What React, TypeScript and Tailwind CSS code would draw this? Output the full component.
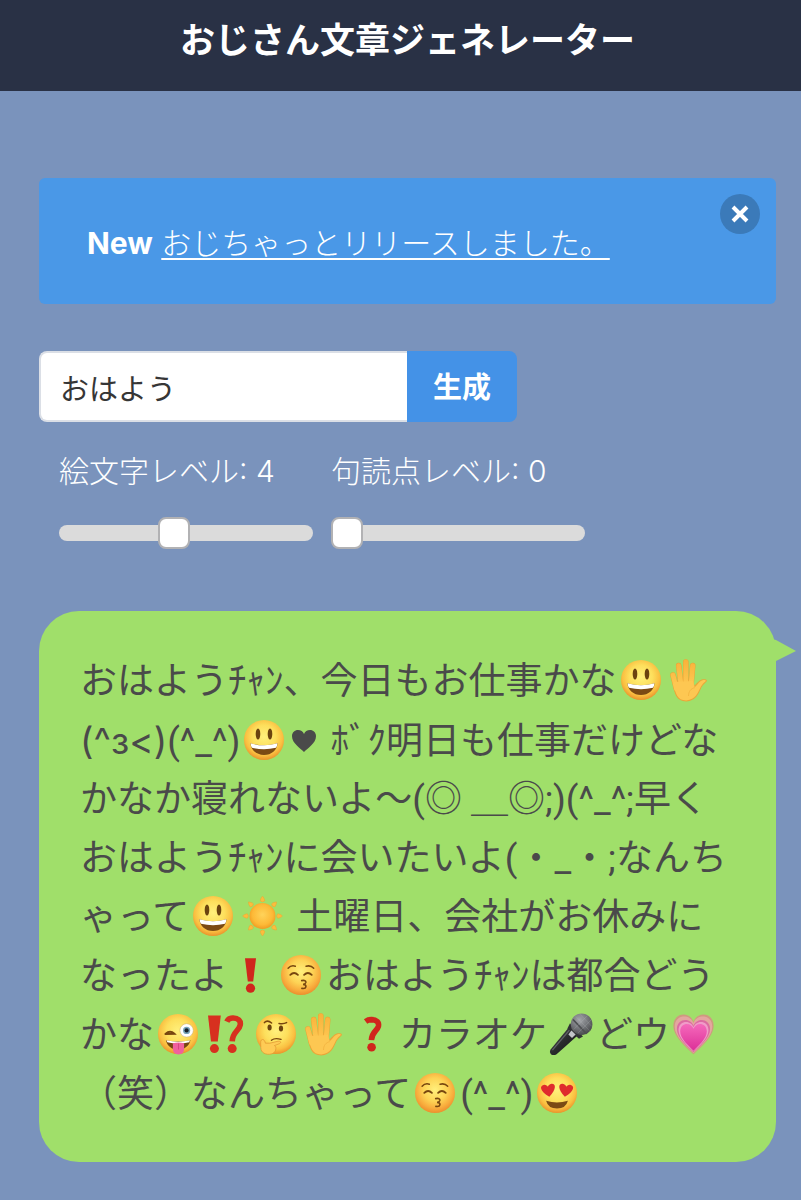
import { useState, type ReactNode } from "react";

function Defs() {
  return (
    <svg className="absolute size-0" aria-hidden="true">
      <defs>
        <radialGradient id="face" cx="50%" cy="42%" r="58%">
          <stop offset="0" stopColor="#fff07c" />
          <stop offset="0.5" stopColor="#fddf5c" />
          <stop offset="0.8" stopColor="#fabf41" />
          <stop offset="1" stopColor="#ea932b" />
        </radialGradient>
        <radialGradient id="blush" cx="50%" cy="42%" r="58%">
          <stop offset="0" stopColor="#fff07c" />
          <stop offset="0.5" stopColor="#fdd355" />
          <stop offset="0.8" stopColor="#f8ac3d" />
          <stop offset="1" stopColor="#ec8f2d" />
        </radialGradient>
        <linearGradient id="skin" gradientUnits="userSpaceOnUse" x1="0" y1="2" x2="0" y2="28">
          <stop offset="0" stopColor="#f9b23a" />
          <stop offset="1" stopColor="#fdc853" />
        </linearGradient>
        <radialGradient id="sun" cx="50%" cy="45%" r="55%">
          <stop offset="0" stopColor="#ffd35a" />
          <stop offset="0.7" stopColor="#fdb937" />
          <stop offset="1" stopColor="#f09c22" />
        </radialGradient>
        <linearGradient id="mic" x1="0" y1="0" x2="1" y2="1">
          <stop offset="0" stopColor="#55575a" />
          <stop offset="0.5" stopColor="#2a2b2d" />
          <stop offset="1" stopColor="#111214" />
        </linearGradient>
        <radialGradient id="mesh" cx="40%" cy="30%" r="70%">
          <stop offset="0" stopColor="#a4a6aa" />
          <stop offset="0.6" stopColor="#707276" />
          <stop offset="1" stopColor="#4a4b4e" />
        </radialGradient>
        <linearGradient id="pink" x1="0" y1="0" x2="0" y2="1">
          <stop offset="0" stopColor="#f569bb" />
          <stop offset="1" stopColor="#dc2f98" />
        </linearGradient>
      </defs>
    </svg>
  );
}

function Glyph({ label, children }: { label: string; children: ReactNode }) {
  return (
    <svg
      role="img"
      aria-label={label}
      viewBox="0 0 49 44"
      className="inline-block h-[44px] w-[49px] align-[-8px]"
    >
      {children}
    </svg>
  );
}

function Disc({ fill = "url(#face)" }: { fill?: string }) {
  return <circle cx="24" cy="22" r="20" fill={fill} />;
}

function Smile() {
  return (
    <Glyph label="😃">
      <Disc />
      <ellipse cx="18" cy="16" rx="2.3" ry="5.5" fill="#6b430f" />
      <ellipse cx="30" cy="16" rx="2.3" ry="5.5" fill="#6b430f" />
      <path d="M10.4 25.2Q24 29.5 37.6 25.2C37 32 31.6 37 24 37S11 32 10.4 25.2Z" fill="#7b4a14" />
      <path d="M10.6 25.2Q24 29.5 37.4 25.2Q37.2 28.8 36 29.8Q24 32.6 12 29.8Q10.8 28.8 10.6 25.2Z" fill="#fff" />
    </Glyph>
  );
}

function Hand() {
  const fingers = "M7 17L10.5 31M12.7 7.6L15 27M19.8 4V26M26.7 7.6L25 27";
  return (
    <Glyph label="✋">
      <path d={fingers} fill="none" stroke="#e9a234" strokeWidth="5.6" strokeLinecap="round" />
      <path d="M7 24L13 22L27.5 22L28.4 27.8C30 26.4 32.8 22.4 35.8 21.6C38.4 21 41.6 21.4 40.8 23.2C39.8 24.8 37.6 25.6 35.6 29C33 34.4 30.4 43.2 20.2 43.4C10.4 43.4 8 36 7 24Z" fill="#eaa638" />
      <path d={fingers} fill="none" stroke="url(#skin)" strokeWidth="4.8" strokeLinecap="round" />
      <path d="M7.8 24L27 23L28.6 29C30.4 28.4 33 23.4 36 22.4C37.8 21.8 40.2 22 39.8 22.9C38 24.4 36.6 25.8 34.9 28.6C32 34.4 29.8 42 20.2 42.4C11.2 42.4 9 35.4 7.8 24Z" fill="#fdc752" />
      <path d="M22.5 38C22.6 33 25 30.6 28.8 29.6" fill="none" stroke="#f3b341" strokeWidth="0.9" />
    </Glyph>
  );
}

function Sun() {
  return (
    <Glyph label="☀️">
      {[0, 45, 90, 135, 180, 225, 270, 315].map((a) => (
        <path
          key={a}
          d="M24.5 2.2C25.4 3 27 5.8 26.6 7Q24.5 8.8 22.4 7C22 5.8 23.6 3 24.5 2.2Z"
          fill="#fbbd3e"
          stroke="#f0a22d"
          strokeWidth="0.5"
          transform={`rotate(${a} 24.5 22)`}
        />
      ))}
      <circle cx="24.5" cy="22" r="13" fill="url(#sun)" />
    </Glyph>
  );
}

function Exclamation() {
  return (
    <Glyph label="❗">
      <path d="M17 5.2H28L25.2 28.6H19.8Z" fill="#d0261c" />
      <circle cx="22.5" cy="35.2" r="4.6" fill="#d0261c" />
    </Glyph>
  );
}

function Interrobang() {
  return (
    <Glyph label="⁉️">
      <g fill="#d7301f">
        <path d="M5 3.5H17.8L14.8 29.5H8Z" />
        <circle cx="11.4" cy="36.6" r="4.5" />
        <circle cx="29.2" cy="36.6" r="4.5" />
      </g>
      <path d="M23.8 9.6Q25.6 5.8 30.2 6C35.2 6.2 38 9 37.2 13C36.2 18.8 29.4 20 29.2 29.4" fill="none" stroke="#d7301f" strokeWidth="5.6" />
    </Glyph>
  );
}

function Question() {
  return (
    <Glyph label="❓">
      <circle cx="21.6" cy="35.2" r="4.3" fill="#d0261c" />
      <path d="M15.6 9.4Q18 7.6 21.4 7.6C26.6 7.8 29.3 10.4 28.4 14.4C27.2 19.2 21.8 19.4 21.4 28.2" fill="none" stroke="#d0261c" strokeWidth="5.6" />
    </Glyph>
  );
}

function Kiss() {
  return (
    <Glyph label="😚">
      <Disc fill="url(#blush)" />
      <g fill="none" stroke="#77460f" strokeLinecap="round">
        <path d="M11.1 15.2Q14 11.9 18.3 13.2M29.1 13.2Q33.9 12 36.7 15.2" strokeWidth="1.5" />
        <path d="M13.3 21.8Q17.1 18 20.9 21.8M27.1 21.8Q30.9 18 34.7 21.8" strokeWidth="1.9" />
        <path d="M24.7 27.6Q29.1 26.8 28.9 29.4Q28.5 31.2 26.1 31.4Q29.3 31.6 28.9 33.8Q28.5 36 24.9 35.4" strokeWidth="1.6" />
      </g>
    </Glyph>
  );
}

function Wink() {
  return (
    <Glyph label="😜">
      <Disc />
      <path d="M11.4 22Q16 17.8 20.4 21.8L11.4 22" fill="none" stroke="#77460f" strokeWidth="1.9" strokeLinecap="round" />
      <circle cx="32.6" cy="18.4" r="6.7" fill="#fff" stroke="#c9a86d" strokeWidth="0.5" />
      <circle cx="32.6" cy="18.4" r="3.6" fill="#78a4bb" />
      <circle cx="32.6" cy="18.4" r="2.1" fill="#18222b" />
      <path d="M11.9 28.2Q24 31 36.5 28.2C35.1 34 30.5 37.6 24 37.6S13.3 34 11.9 28.2Z" fill="#774511" />
      <path d="M12.5 28.3Q24 31 35.9 28.3L35.3 30.2Q24 33 13.3 30.2Z" fill="#fff" />
      <path d="M18.9 31.2Q24.3 29.6 30.1 31.2V37Q30.1 42.4 24.5 42.4T18.9 37Z" fill="#f0609d" />
      <path d="M24.5 31.5V37.5" stroke="#d64383" strokeWidth="1" />
    </Glyph>
  );
}

function Thinking() {
  return (
    <Glyph label="🤔">
      <Disc />
      <ellipse cx="17.6" cy="15.6" rx="2.1" ry="3" fill="#6b430f" />
      <ellipse cx="29" cy="16.6" rx="2.1" ry="3" fill="#6b430f" />
      <g fill="none" stroke="#77460f" strokeLinecap="round">
        <path d="M12.4 10.6Q15.4 7.4 19.6 11M27 11.4Q31.6 12.2 34.6 10.6" strokeWidth="1.5" />
        <path d="M19.4 28.2Q23 25.6 29 27.4" strokeWidth="1.4" />
      </g>
      <path d="M9.4 28C10.6 26.8 12.6 27.6 13.4 31.2L17.8 31.2L26 29.2C29.2 28.8 29.4 31 27.2 31.8L22.4 33.6C25 34.4 24.4 41 19.2 42C13.8 43.2 8.8 40.8 8.8 35.6C8.8 32 8.2 29.2 9.4 28Z" fill="#fecb55" stroke="#e39a34" strokeWidth="0.8" />
    </Glyph>
  );
}

function HeartEyes() {
  const heart = "M0 6.6C-7-0.4-6.6-5.6-3.2-5.8C-1.4-5.8-0.4-4.4 0-3.4C0.4-4.4 1.4-5.8 3.2-5.8C6.6-5.6 7-0.4 0 6.6Z";
  return (
    <Glyph label="😍">
      <Disc />
      <path d={heart} fill="#df2b2d" transform="translate(15.4 19.2) rotate(-8) scale(1.25 1.02)" />
      <path d={heart} fill="#df2b2d" transform="translate(32.8 19.2) rotate(8) scale(1.25 1.02)" />
      <path d="M13.1 29.8Q24 33.2 34.9 29.8Q32.9 37.6 24 37.6T13.1 29.8Z" fill="#7b4a14" />
    </Glyph>
  );
}

function Mic() {
  return (
    <Glyph label="🎤">
      <path d="M22.5 14.5L31.2 23L9.6 42.2Q6.6 43.8 4.2 42.4Q2 40.2 3.6 37.4Z" fill="url(#mic)" />
      <path d="M5.4 38.2L23.4 17" stroke="#606266" strokeWidth="1.2" />
      <path d="M23 11.2L36 24.6L32 26.8L20.4 16.4Z" fill="#313235" />
      <path d="M24.4 18.6L28.6 22.6L25 26L21.4 22.4Z" fill="#c3c5c8" />
      <circle cx="34.6" cy="12.2" r="10.8" fill="url(#mesh)" />
      <path d="M26 7.5L39.6 21.8" stroke="#4d4f52" strokeWidth="1.8" />
      <path d="M29 4.6L42.6 18.8M33 2.2L45 14.6M26.6 17.6L40.4 3.6M31 21L44.6 7.4" stroke="#c0c2c6" strokeOpacity="0.28" strokeWidth="0.8" />
    </Glyph>
  );
}

function GrowingHeart() {
  const heart = "M0 16C-5 11-13.6 3.4-13.6-4.2C-13.6-9.6-10-12-6.8-12C-3.4-12-1-9.8 0-7C1-9.8 3.4-12 6.8-12C10-12 13.6-9.6 13.6-4.2C13.6 3.4 5 11 0 16Z";
  return (
    <Glyph label="💗">
      <path d={heart} fill="#cf9a7f" transform="translate(23.5 19.6) scale(1.48 1.42)" />
      <path d={heart} fill="#e3a79f" transform="translate(23.5 20.2) scale(1.38 1.3)" />
      <path d={heart} fill="#dc6ba2" transform="translate(23.5 21.8) scale(1.22 1.16)" />
      <path d={heart} fill="#f09bc8" transform="translate(23.5 22.6) scale(1.1 1.04)" />
      <path d={heart} fill="url(#pink)" transform="translate(23.5 23.4) scale(0.98 0.96)" />
    </Glyph>
  );
}

function BlackHeart() {
  return (
    <svg role="img" aria-label="♥" viewBox="0 0 32 24" className="inline-block h-[24px] w-[32px] align-[1px]">
      <path d="M15 23C11.4 19 3 14.4 3 7.2C3 3.4 5.8 1 9 1C11.8 1 14 2.6 15 5C16 2.6 18.2 1 21 1C24.2 1 27 3.4 27 7.2C27 14.4 18.6 19 15 23Z" fill="#4a4a4a" />
    </svg>
  );
}

function Level({ id, label, initial, max }: { id: string; label: string; initial: number; max: number }) {
  const [value, setValue] = useState(initial);
  return (
    <div className="flex w-[254px] flex-col">
      <label htmlFor={id} className="text-[30px] leading-[44px] font-light whitespace-nowrap text-white">
        {label}: {value}
      </label>
      <input
        id={id}
        type="range"
        min={0}
        max={max}
        value={value}
        onChange={(e) => setValue(Number(e.target.value))}
        className="mt-8 h-4 w-full appearance-none rounded-full bg-[#dbdbdb] [&::-webkit-slider-thumb]:size-8 [&::-webkit-slider-thumb]:appearance-none [&::-webkit-slider-thumb]:rounded-lg [&::-webkit-slider-thumb]:border-2 [&::-webkit-slider-thumb]:border-[#b2b2b4] [&::-webkit-slider-thumb]:bg-white"
      />
    </div>
  );
}

export default function App() {
  const [name, setName] = useState("おはよう");
  const [noticeOpen, setNoticeOpen] = useState(true);
  return (
    <div className="min-h-screen bg-[#7a93bc] font-[Inter,'Noto_Sans_CJK_JP',sans-serif]">
      <Defs />
      <header className="flex h-[91px] justify-center bg-[#293145] pt-[13px] pl-[14px]">
        <h1 className="text-[35px] leading-[54px] font-bold text-white">おじさん文章ジェネレーター</h1>
      </header>
      <main className="flex flex-col pt-[87px] pr-[25px] pb-[38px] pl-[39px]">
        {noticeOpen && (
          <div className="relative mb-[47px] rounded-md bg-[#4a98e7] px-12 pt-[42px] pb-[38px] text-[30px] leading-[46px] text-white">
            <strong className="font-bold">New</strong>{" "}
            <a href="#ojichat" className="font-light underline decoration-2 underline-offset-4">
              おじちゃっとリリースしました。
            </a>
            <button
              type="button"
              aria-label="閉じる"
              onClick={() => setNoticeOpen(false)}
              className="absolute top-4 right-4 flex size-10 items-center justify-center rounded-full bg-[#3b7ab9]"
            >
              <svg viewBox="0 0 18 18" className="size-[18px]" aria-hidden="true">
                <path d="M2 2L16 16M16 2L2 16" stroke="#fff" strokeWidth="4" />
              </svg>
            </button>
          </div>
        )}
        <form className="flex" onSubmit={(e) => e.preventDefault()}>
          <input
            type="text"
            aria-label="名前"
            value={name}
            onChange={(e) => setName(e.target.value)}
            className="h-[71px] w-[368px] rounded-l-lg border-2 border-r-0 border-[#dbdfe6] bg-white px-[19px] text-[29px] text-[#363636] outline-none"
          />
          <button type="submit" className="h-[71px] w-[110px] rounded-r-lg bg-[#4492e7] pt-0.5 text-[29px] font-bold text-white">
            生成
          </button>
        </form>
        <div className="mt-[27px] flex gap-[18px] pl-5">
          <Level id="emoji-level" label="絵文字レベル" initial={4} max={9} />
          <Level id="punctuation-level" label="句読点レベル" initial={0} max={3} />
        </div>
        <section className="relative mt-[70px] rounded-[40px] bg-[#a0df6a] px-[41px] pt-[41px] pb-[38px]">
          <svg viewBox="0 0 24 24" className="absolute top-7 -right-5 size-6" aria-hidden="true">
            <path d="M0 0L4 1L24 12L4 22L0 22Z" fill="#a0df6a" />
          </svg>
          <p className="font-[Roboto,'Noto_Sans_CJK_JP',sans-serif] text-[37px] leading-[59px] whitespace-nowrap text-[#4a4a4a] [&>span]:block [&>span]:h-[59px]">
            <span>おはようﾁｬﾝ、今日もお仕事かな<Smile /><Hand /></span>
            <span><span className="font-[Inter,sans-serif]">(^з&lt;)</span>(^_^)<Smile /><BlackHeart /> ﾎﾞｸ明日も仕事だけどな</span>
            <span>かなか寝れないよ〜(◎ ＿◎;)(^_^;早く</span>
            <span>おはようﾁｬﾝに会いたいよ(・_・;なんち</span>
            <span>ゃって<Smile /><Sun /> 土曜日、会社がお休みに</span>
            <span>なったよ<Exclamation /><Kiss />おはようﾁｬﾝは都合どう</span>
            <span>かな<Wink /><Interrobang /><Thinking /><Hand /><Question />カラオケ<Mic />どウ<GrowingHeart /></span>
            <span>（笑）なんちゃって<Kiss />(^_^)<HeartEyes /></span>
          </p>
        </section>
      </main>
    </div>
  );
}
